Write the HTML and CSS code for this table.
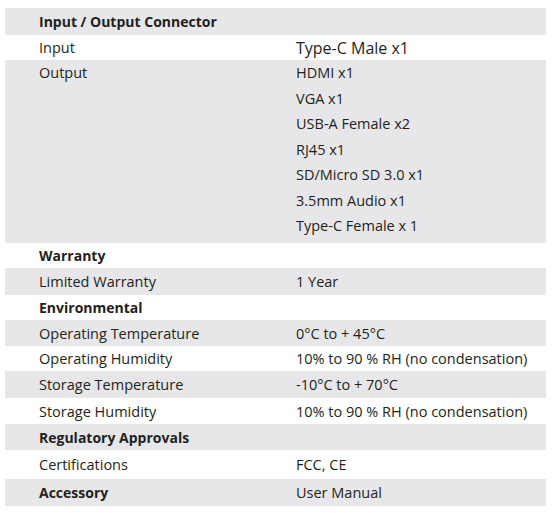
FILE: index.html
```html
<!DOCTYPE html>
<html>
<head>
<meta charset="utf-8">
<link rel="stylesheet" href="styles.css">
</head>
<body>
<table class="spec">
  <tr class="gray h27 head"><td class="label">Input / Output Connector</td><td class="value"></td></tr>
  <tr class="white h25"><td class="label">Input</td><td class="value big">Type-C Male x1</td></tr>
  <tr class="gray"><td class="label top">Output</td><td class="value list">
    <div>HDMI x1</div><div>VGA x1</div><div>USB-A Female x2</div><div>RJ45 x1</div><div>SD/Micro SD 3.0 x1</div><div>3.5mm Audio x1</div><div>Type-C Female x 1</div>
  </td></tr>
  <tr class="white h25 head"><td class="label">Warranty</td><td class="value"></td></tr>
  <tr class="gray h27"><td class="label">Limited Warranty</td><td class="value">1 Year</td></tr>
  <tr class="white h25 head"><td class="label">Environmental</td><td class="value"></td></tr>
  <tr class="gray h26"><td class="label">Operating Temperature</td><td class="value">0°C to + 45°C</td></tr>
  <tr class="white h25"><td class="label">Operating Humidity</td><td class="value">10% to 90 % RH (no condensation)</td></tr>
  <tr class="gray h27"><td class="label">Storage Temperature</td><td class="value">-10°C to + 70°C</td></tr>
  <tr class="white h26"><td class="label">Storage Humidity</td><td class="value">10% to 90 % RH (no condensation)</td></tr>
  <tr class="gray h26 head"><td class="label">Regulatory Approvals</td><td class="value"></td></tr>
  <tr class="white h29"><td class="label">Certifications</td><td class="value">FCC, CE</td></tr>
  <tr class="gray h27 head"><td class="label">Accessory</td><td class="value plain">User Manual</td></tr>
</table>
</body>
</html>
```
FILE: styles.css
```css
html, body {
  margin: 0;
  padding: 0;
  background: #ffffff;
}
body {
  padding: 8px 12px 0 5px;
  font-family: "Open Sans", "Liberation Sans", sans-serif;
  font-size: 14.5px;
  color: #231f20;
}
.spec {
  width: 541px;
  border-collapse: collapse;
  border-spacing: 0;
}
.spec td {
  padding: 0;
  vertical-align: middle;
  white-space: nowrap;
}
.gray { background: #e7e7e9; }
.white { background: #ffffff; }
.h25 { height: 25px; }
.h26 { height: 26px; }
.h27 { height: 27px; }
.h29 { height: 29px; }
.label {
  width: 257px;
  padding-left: 34px !important;
}
.value {
  padding-left: 0;
}
.head .label { font-weight: 700; font-size: 14px; }
.head .plain { font-weight: 400; }
.big { font-size: 16px; }
.top { vertical-align: top !important; padding-top: 3px !important; line-height: 20px; }
.list { height: 183px; line-height: 25.5px; vertical-align: top !important; }
```
